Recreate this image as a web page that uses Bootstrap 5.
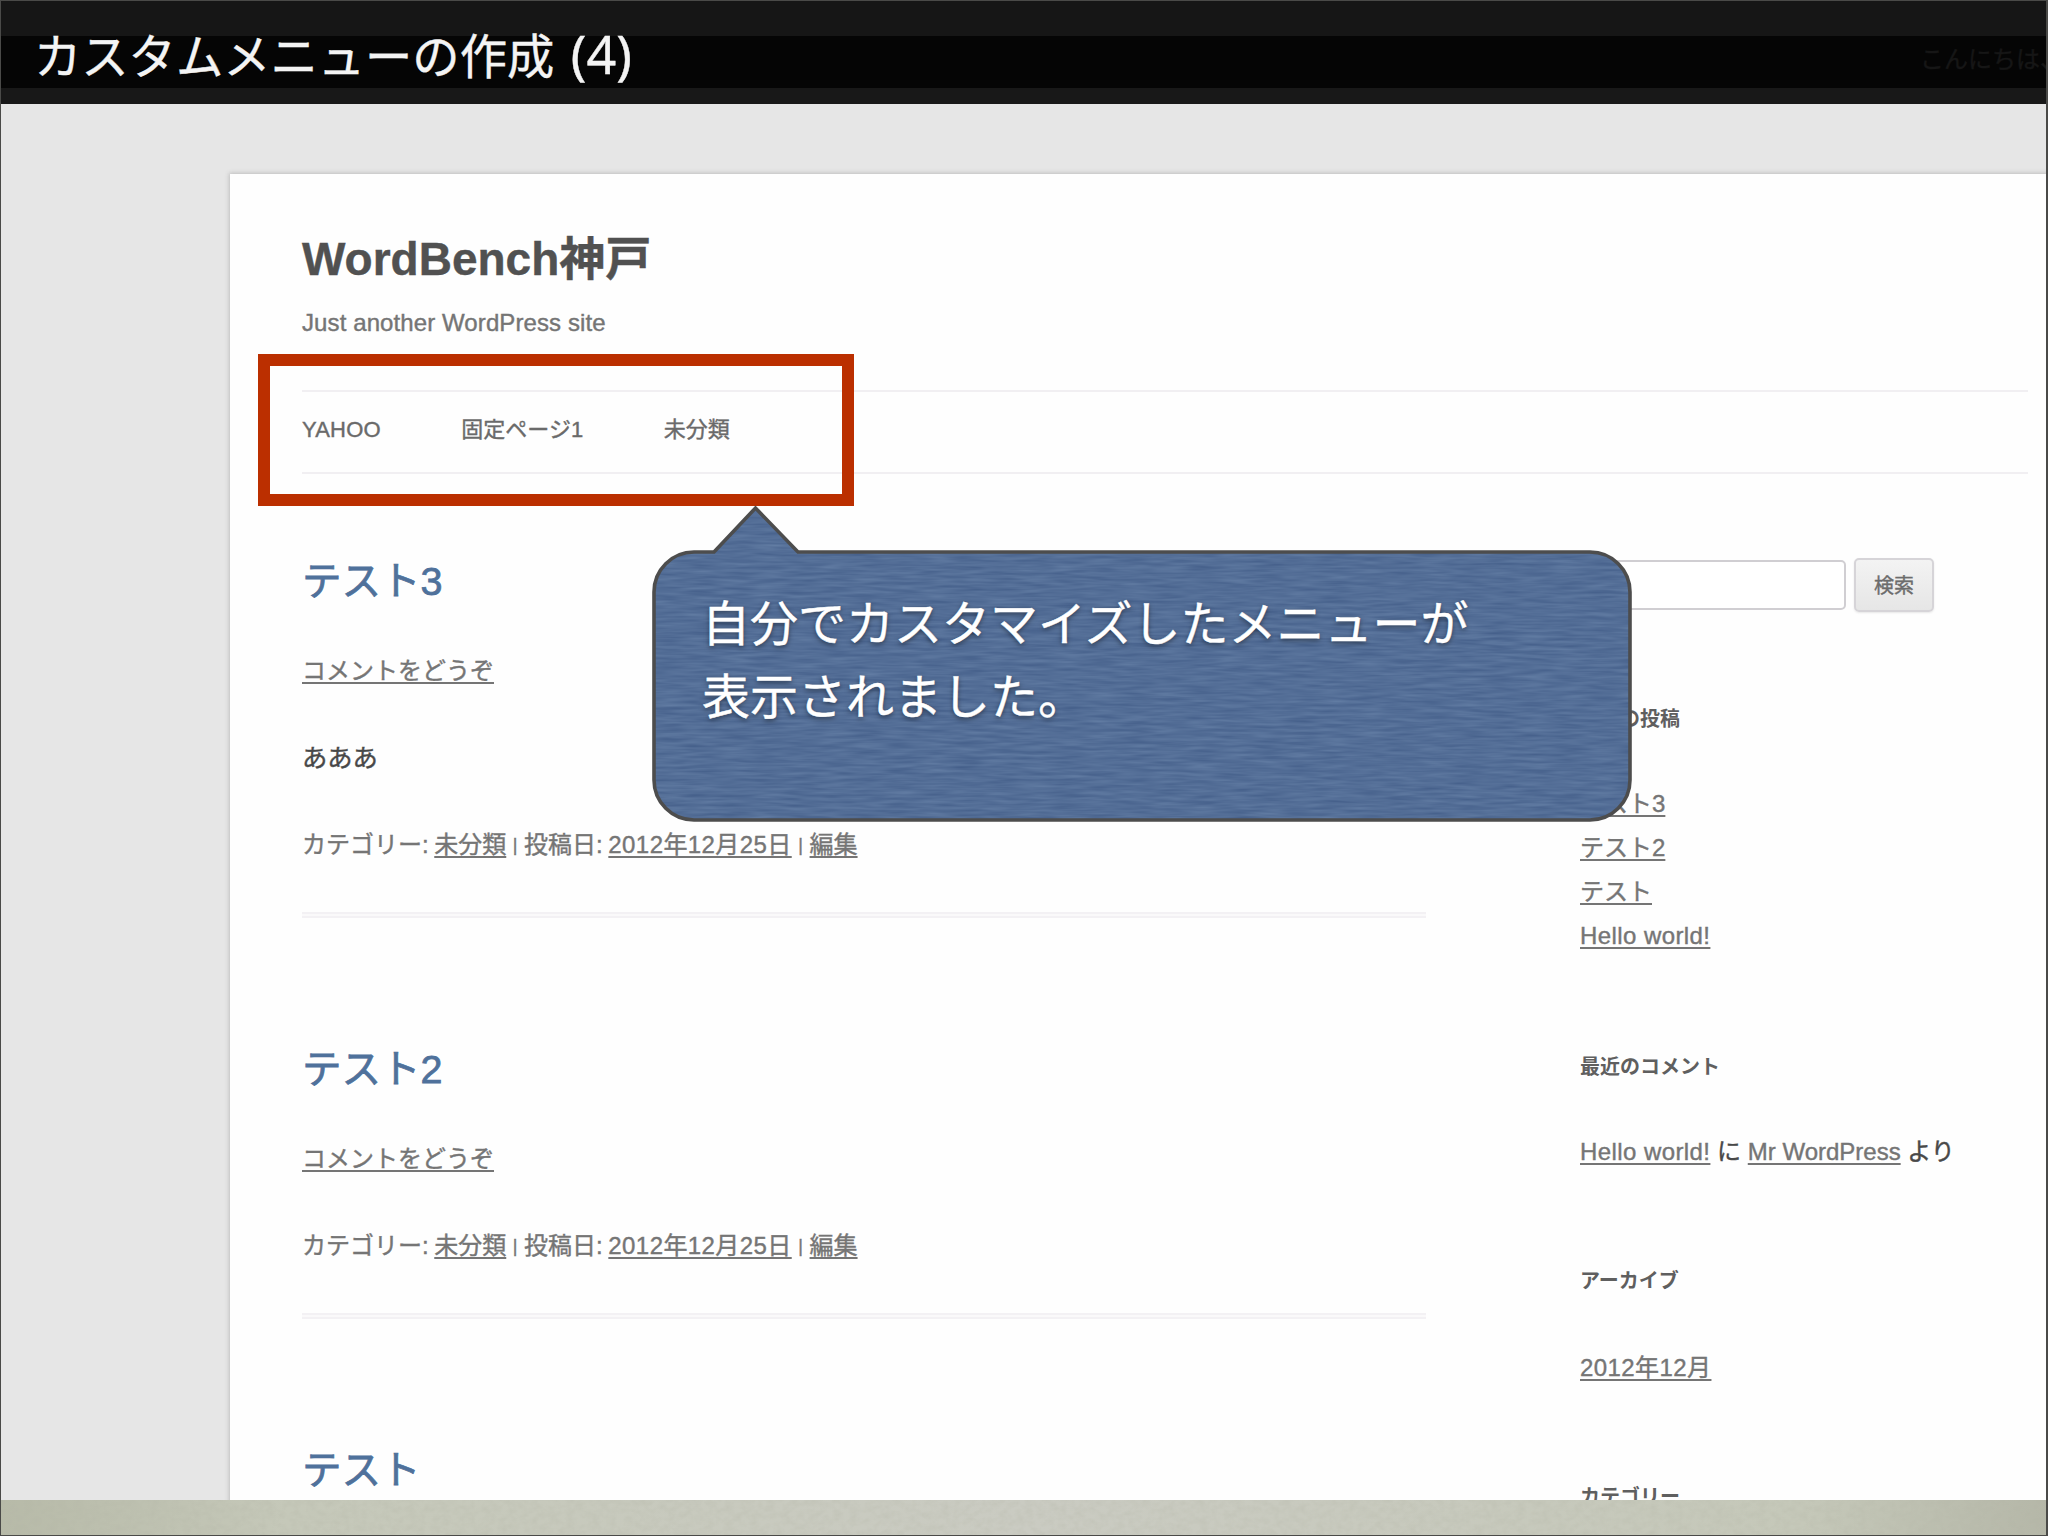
<!DOCTYPE html>
<html lang="ja">
<head>
<meta charset="utf-8">
<title>カスタムメニューの作成 (4)</title>
<link href="https://cdn.jsdelivr.net/npm/bootstrap@5.3.0/dist/css/bootstrap.min.css" rel="stylesheet">
<style>
  body { margin: 0; font-family: "Liberation Sans", "Noto Sans CJK JP", sans-serif; font-size: 24px; line-height: 44px; color: #484848; background: #fff; -webkit-text-stroke: .4px currentColor; }
  .slide { width: 2048px; height: 1536px; }
  .slide-frame { inset: 0; border: 1px solid #4a4a48; border-width: 1px 2px 1px 1px; pointer-events: none; z-index: 5; }
  .slide-head { height: 104px; padding: 0 0 0 34px; background: linear-gradient(#161616 36px, #050505 36px, #050505 88px, #181818 88px); }
  .slide-title { font-family: "Noto Sans", "Noto Sans CJK JP", sans-serif; font-size: 47.3px; line-height: 60px; font-weight: 400; color: #f4f4f4; margin-top: 26px; }
  .slide-no { font-size: 52px; line-height: 1; margin-left: 3px; }
  .greeting { color: #161616; font-size: 24px; width: 128px; margin-top: 38px; white-space: nowrap; }
  .stage { background: #e6e6e6; padding: 70px 0 0 230px; min-height: 0; }
  .sheet { background: #fefefe; height: 1500px; padding: 57px 20px 0 72px; box-shadow: 0 0 4px 1px rgba(80,80,80,.25); }
  .site-name { font-size: 46px; line-height: 56px; font-weight: 700; color: #515151; margin: 0; }
  .tagline { line-height: 34px; margin-top: 19px; color: #757575; letter-spacing: .1px; }
  .site-nav { margin-top: 50px; height: 84px; padding-bottom: 4px; border: solid #f1eff2; border-width: 2px 0; gap: 80.500px; font-size: 22px; }
  .site-nav a { color: #6a6a6a; text-decoration: none; }
  .site-nav a:first-child { letter-spacing: .2px; }
  .cols { gap: 154px; }
  .posts { width: 1124px; padding-top: 83px; }
  .post-title { font-size: 39.5px; line-height: 48px; font-weight: 400; color: #4f719b; margin: 0 0 44px; -webkit-text-stroke: .8px currentColor; }
  .u { color: #757575; text-decoration: underline; text-decoration-thickness: 2px; text-underline-offset: 3px; text-decoration-skip-ink: none; }
  .body-text { margin-top: 43px; font-size: 25.3px; }
  .meta { margin-top: 43px; height: 44px; color: #757575; white-space: nowrap; word-spacing: -1.1px; }
  .pipe { font-size: 18px; line-height: 1; vertical-align: 2px; margin: 0 1px; }
  .wide { letter-spacing: .42px; }
  .divider { height: 6px; margin: 45px 0 127px; background: #faf9fa; border: solid #f3f1f4; border-width: 2px 0; }
  .side { width: 420px; padding-top: 84px; }
  .search { gap: 8px; margin-bottom: 87px; }
  .search .form-control { width: 266px; height: 50px; border: 2px solid #d0ced2; border-radius: 5px; background: #fff; }
  .search .btn { width: 80px; height: 54px; padding: 2px 0 0; border: 2px solid #d6d4d8; border-radius: 5px; font-size: 20px; line-height: 48px; color: #6c6c6c; background: linear-gradient(#f3f3f3, #e6e6e6); box-shadow: 0 1px 2px rgba(64,64,64,.12); }
  .side-h { font-size: 20px; line-height: 40px; font-weight: 700; color: #5f5f5f; margin: 0; -webkit-text-stroke: 0; }
  .recent { margin: 43px 0 89px; }
  .comments { margin: 43px 0 87px; }
  .archive { margin: 45px 0 87px; }
  .hl { left: 258px; top: 354px; width: 596px; height: 152px; border: 12px solid #bb2f00; z-index: 2; }
  .bubble { left: 652px; top: 504px; width: 981px; height: 319px; z-index: 3; }
  .bubble-text { left: 702px; top: 584px; z-index: 4; font-family: "Noto Sans CJK JP", sans-serif; font-size: 48px; line-height: 73px; color: #fff; text-shadow: 0 2px 5px rgba(0,0,0,.5); white-space: nowrap; }
  .slide-foot { height: 36px; background: linear-gradient(90deg, #b7baa8, #c5c8b9 14%, #cacbc2 50%, #c5c8b9 88%, #b5b7a8); }
  .slide-foot svg { display: block; }
</style>
<script src="https://cdn.jsdelivr.net/npm/bootstrap@5.3.0/dist/js/bootstrap.bundle.min.js"></script>
</head>
<body>
<div class="slide d-flex flex-column position-relative overflow-hidden">
  <header class="slide-head d-flex justify-content-between align-items-start flex-shrink-0">
    <h1 class="slide-title mb-0">カスタムメニューの作成<span class="slide-no"> (4)</span></h1>
    <div class="greeting">こんにちは、</div>
  </header>

  <main class="stage flex-grow-1 overflow-hidden">
    <div class="sheet">
      <h2 class="site-name">WordBench神戸</h2>
      <div class="tagline">Just another WordPress site</div>
      <nav class="site-nav d-flex align-items-center">
        <a href="#">YAHOO</a><a href="#">固定ページ1</a><a href="#">未分類</a>
      </nav>
      <div class="cols d-flex align-items-start">
        <section class="posts flex-shrink-0">
          <article>
            <h3 class="post-title">テスト3</h3>
            <div><a class="u" href="#">コメントをどうぞ</a></div>
            <div class="body-text">あああ</div>
            <div class="meta">カテゴリー: <a class="u" href="#">未分類</a> <span class="pipe">|</span> 投稿日: <a class="u wide" href="#">2012年12月25日</a> <span class="pipe">|</span> <a class="u" href="#">編集</a></div>
            <div class="divider"></div>
          </article>
          <article>
            <h3 class="post-title">テスト2</h3>
            <div><a class="u" href="#">コメントをどうぞ</a></div>
            <div class="meta">カテゴリー: <a class="u" href="#">未分類</a> <span class="pipe">|</span> 投稿日: <a class="u wide" href="#">2012年12月25日</a> <span class="pipe">|</span> <a class="u" href="#">編集</a></div>
            <div class="divider"></div>
          </article>
          <article>
            <h3 class="post-title">テスト</h3>
          </article>
        </section>
        <aside class="side flex-shrink-0">
          <form class="search d-flex align-items-center">
            <input class="form-control" type="text" aria-label="検索">
            <button class="btn" type="button">検索</button>
          </form>
          <h4 class="side-h">最近の投稿</h4>
          <ul class="recent list-unstyled">
            <li><a class="u" href="#">テスト3</a></li>
            <li><a class="u" href="#">テスト2</a></li>
            <li><a class="u" href="#">テスト</a></li>
            <li><a class="u wide" href="#">Hello world!</a></li>
          </ul>
          <h4 class="side-h">最近のコメント</h4>
          <div class="comments"><a class="u wide" href="#">Hello world!</a> に <a class="u" href="#">Mr WordPress</a> より</div>
          <h4 class="side-h">アーカイブ</h4>
          <div class="archive"><a class="u wide" href="#">2012年12月</a></div>
          <h4 class="side-h">カテゴリー</h4>
        </aside>
      </div>
    </div>
  </main>

  <footer class="slide-foot flex-shrink-0">
    <svg width="2048" height="36" aria-hidden="true">
      <filter id="paper" x="0" y="0" width="100%" height="100%">
        <feTurbulence type="fractalNoise" baseFrequency=".12 .16" numOctaves="3" seed="4"/>
        <feColorMatrix values="0 0 0 0 .45  0 0 0 0 .46  0 0 0 0 .38  .5 0 0 0 -.17"/>
      </filter>
      <rect width="2048" height="36" filter="url(#paper)"/>
    </svg>
  </footer>

  <div class="hl position-absolute"></div>
  <svg class="bubble position-absolute" viewBox="0 0 981 319" aria-hidden="true">
    <defs>
      <filter id="denim" x="0" y="0" width="100%" height="100%" color-interpolation-filters="sRGB">
        <feTurbulence type="fractalNoise" baseFrequency=".03 .32" numOctaves="2" seed="7"/>
        <feColorMatrix values=".14 0 0 0 .256  .14 0 0 0 .36  .12 0 0 0 .53  0 0 0 0 1"/>
      </filter>
      <clipPath id="shape"><path d="M42 48H62L103.500 4L146 48H938A40 40 0 0 1 978 88V276A40 40 0 0 1 938 316H42A40 40 0 0 1 2 276V88A40 40 0 0 1 42 48Z"/></clipPath>
    </defs>
    <g clip-path="url(#shape)"><rect width="981" height="319" filter="url(#denim)"/></g>
    <path d="M42 48H62L103.500 4L146 48H938A40 40 0 0 1 978 88V276A40 40 0 0 1 938 316H42A40 40 0 0 1 2 276V88A40 40 0 0 1 42 48Z" fill="none" stroke="#4d4d4d" stroke-width="3.600"/>
  </svg>
  <div class="bubble-text position-absolute">自分でカスタマイズしたメニューが<br>表示されました。</div>
  <div class="slide-frame position-absolute"></div>
</div>
</body>
</html>
